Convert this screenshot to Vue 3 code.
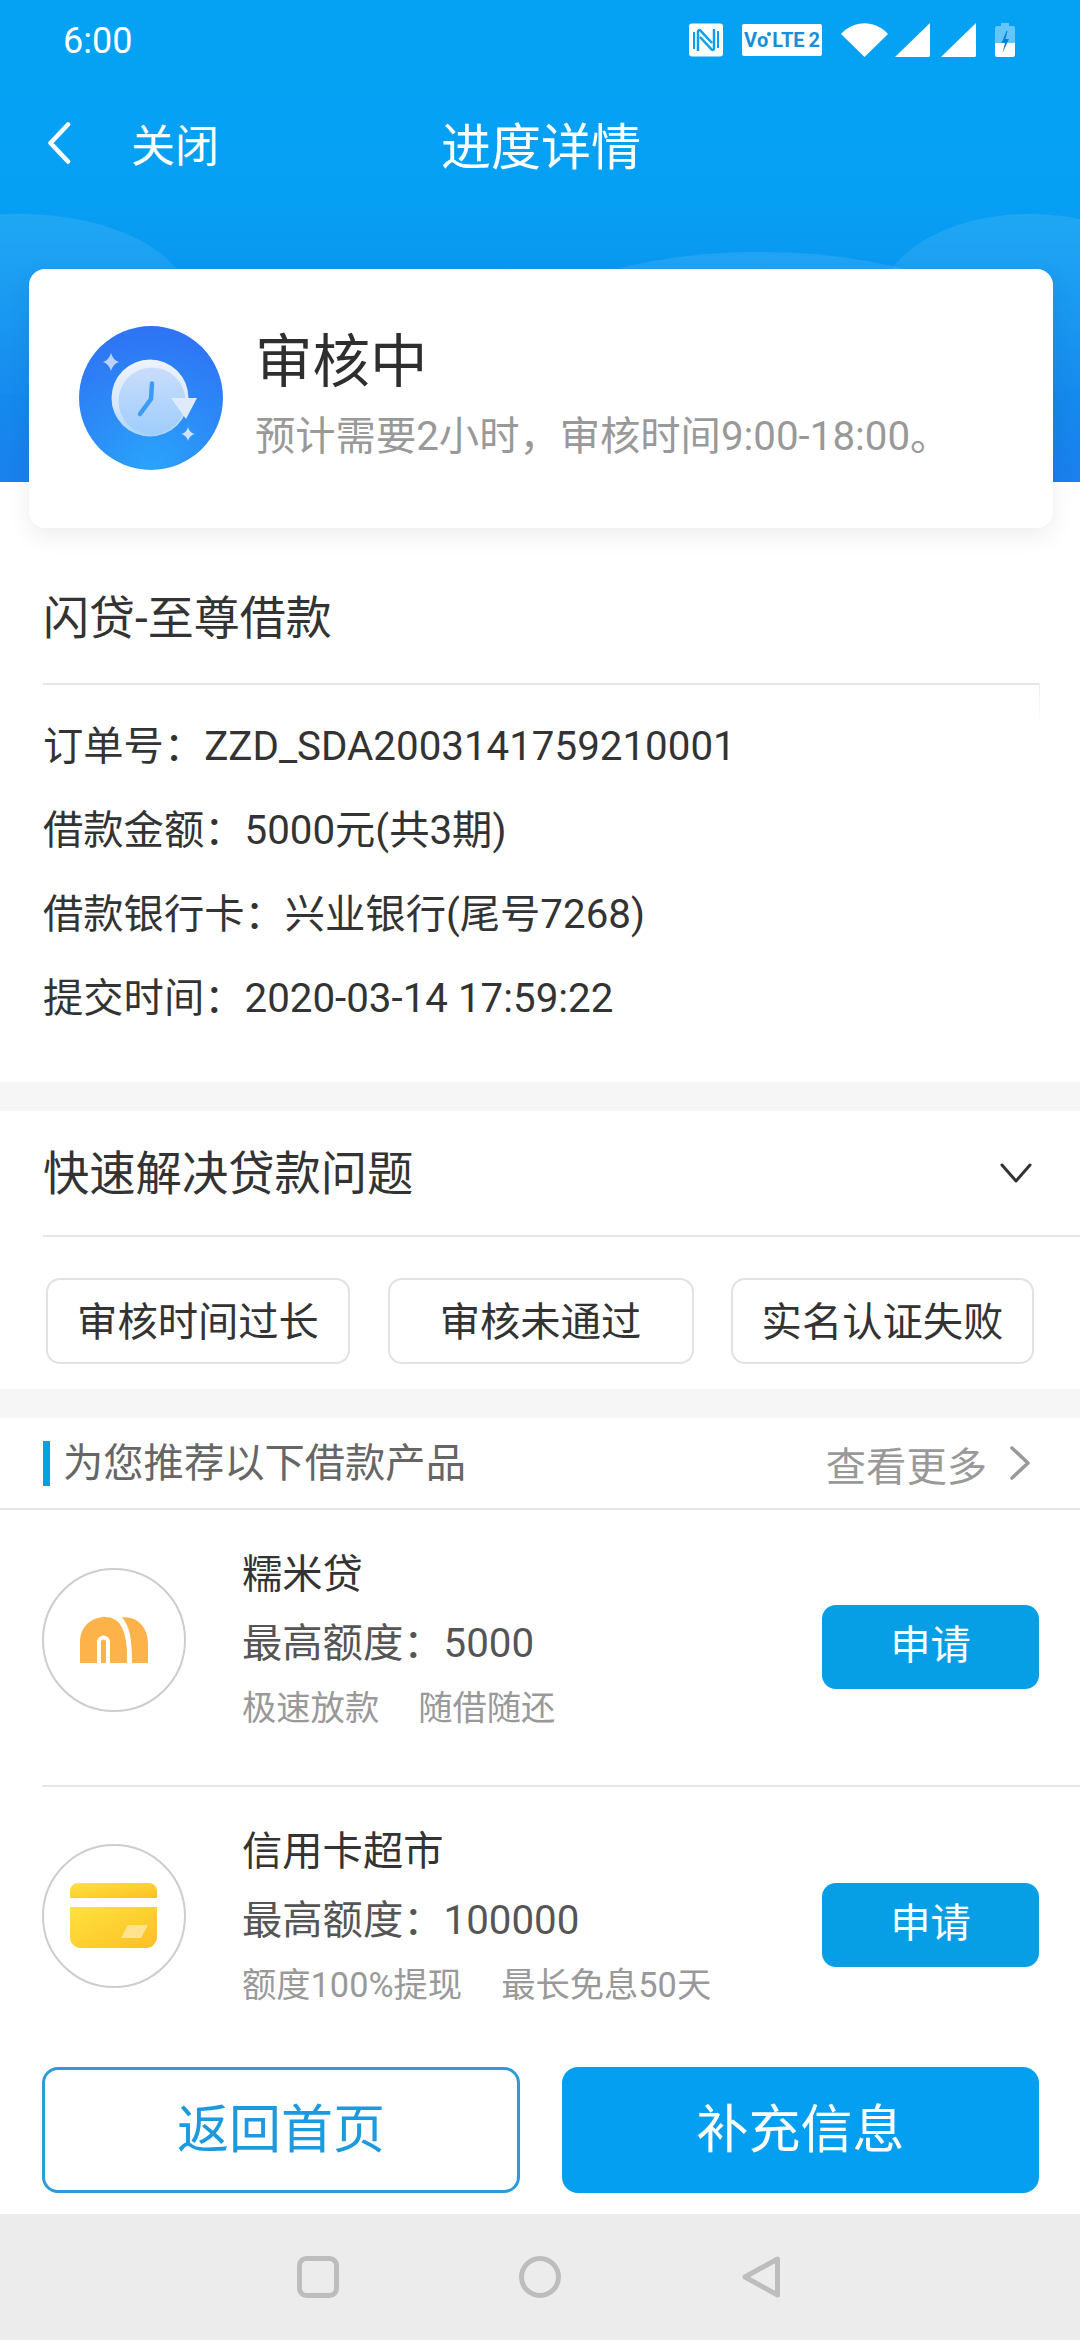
<script setup>
const infoRows = [
  '订单号：ZZD_SDA2003141759210001',
  '借款金额：5000元(共3期)',
  '借款银行卡：兴业银行(尾号7268)',
  '提交时间：2020-03-14 17:59:22'
]
const chips = ['审核时间过长', '审核未通过', '实名认证失败']
const products = [
  { name: '糯米贷', limit: '最高额度：5000', tags: ['极速放款', '随借随还'], kind: 'm' },
  { name: '信用卡超市', limit: '最高额度：100000', tags: ['额度100%提现', '最长免息50天'], kind: 'card' }
]
</script>

<template>
  <div class="page">
    <header class="hero">
      <svg class="clouds" viewBox="0 0 1080 268" aria-hidden="true">
        <defs>
          <linearGradient id="cloud" x1="0" y1="0" x2="0" y2="1">
            <stop offset="0" stop-color="#fff" stop-opacity=".1" />
            <stop offset="1" stop-color="#fff" stop-opacity=".01" />
          </linearGradient>
        </defs>
        <ellipse cx="20" cy="90" rx="170" ry="90" fill="url(#cloud)" />
        <ellipse cx="1030" cy="90" rx="150" ry="90" fill="url(#cloud)" />
        <ellipse cx="760" cy="116" rx="230" ry="78" fill="url(#cloud)" />
      </svg>

      <div class="status">
        <span class="time">6:00</span>
        <div class="status-icons">
          <svg width="34" height="34" viewBox="0 0 34 34">
            <rect x="0" y="0.5" width="34" height="33" rx="3" fill="#fff" />
            <path d="M9 28V8.500c0-1.500 1.500-1.800 2.500-.8L23 20M25 6v19.500c0 1.500-1.500 1.800-2.500.8L11 14" fill="none" stroke="#0aa0f2" stroke-width="2.500" />
            <path d="M5 9v17M29 8v17" fill="none" stroke="#0aa0f2" stroke-width="2" />
          </svg>
          <div class="volte"><span>V</span><span>o</span><span class="volte-wave"></span><span>LTE</span><span class="volte-2">2</span></div>
          <svg class="wifi" width="47" height="34" viewBox="0 0 47 34">
            <path d="M0 11C13-3.500 34-3.500 47 11L23.500 34Z" fill="#fff" />
            <path d="M5 26l4-5 4 5zM5 28h8l-4 5z" fill="#0aa0f2" />
          </svg>
          <svg class="sig" width="35" height="34" viewBox="0 0 35 34">
            <path d="M35 0V32.500a1.500 1.500 0 0 1-1.500 1.500H0Z" fill="#fff" />
          </svg>
          <svg class="sig2" width="35" height="34" viewBox="0 0 35 34">
            <path d="M35 0V32.500a1.500 1.500 0 0 1-1.500 1.500H0Z" fill="#fff" />
          </svg>
          <svg class="bat" width="20" height="34" viewBox="0 0 20 34">
            <path d="M6 0h8v3h4a2 2 0 0 1 2 2v15H0V5a2 2 0 0 1 2-2h4z" fill="#fff" fill-opacity=".38" />
            <path d="M0 20h20v12a2 2 0 0 1-2 2H2a2 2 0 0 1-2-2z" fill="#fff" />
            <path d="M11.500 8L6.500 20h3.500L7.500 30 14 16h-3.500L12.500 8z" fill="#0a7ed0" />
          </svg>
        </div>
      </div>

      <nav class="topnav">
        <svg class="back" width="24" height="42" viewBox="0 0 24 42">
          <path d="M21 2.500L3.500 21 21 39.500" fill="none" stroke="#fff" stroke-width="4.500" stroke-linecap="round" stroke-linejoin="round" />
        </svg>
        <span class="close">关闭</span>
        <span class="title">进度详情</span>
      </nav>
    </header>

    <section class="state-card">
      <svg class="state-icon" width="144" height="144" viewBox="0 0 144 144">
        <defs>
          <radialGradient id="disc" cx="0.5" cy="1" r="1.05">
            <stop offset="0" stop-color="#2aa4fb" />
            <stop offset="0.5" stop-color="#2c8af7" />
            <stop offset="1" stop-color="#2f70f4" />
          </radialGradient>
          <linearGradient id="ring" x1="0" y1="0" x2="0" y2="1">
            <stop offset="0" stop-color="#eef3fc" />
            <stop offset="0.6" stop-color="#d8e7fb" />
            <stop offset="1" stop-color="#a8d2fc" />
          </linearGradient>
          <linearGradient id="dial" x1="0" y1="0" x2="0" y2="1">
            <stop offset="0" stop-color="#c9ddfb" />
            <stop offset="1" stop-color="#9fcdfc" />
          </linearGradient>
        </defs>
        <circle cx="72" cy="72" r="72" fill="url(#disc)" />
        <circle cx="71" cy="72" r="38.500" fill="url(#ring)" />
        <circle cx="73" cy="75" r="33.500" fill="url(#dial)" />
        <path d="M92 72H118L107 93Z" fill="#dfeafa" />
        <path d="M73 57.500L72 73 61 88" fill="none" stroke="#3d9bf5" stroke-width="4.500" stroke-linecap="round" stroke-linejoin="round" />
        <path d="M32 27q2 7 8 9q-6 2-8 9q-2-7-8-9q6-2 8-9Z" fill="#bcd2fa" />
        <path d="M109 101q1.500 5.500 6.500 7q-5 1.500-6.500 7q-1.500-5.500-6.500-7q5-1.500 6.500-7Z" fill="#cfe2fb" />
      </svg>
      <div class="state-text">
        <div class="state-title">审核中</div>
        <div class="state-sub">预计需要2小时，审核时间9:00-18:00。</div>
      </div>
    </section>

    <section class="order">
      <h2 class="order-title">闪贷-至尊借款</h2>
      <p v-for="row in infoRows" :key="row" class="order-row">{{ row }}</p>
    </section>

    <section class="quick">
      <div class="quick-head">
        <span class="quick-title">快速解决贷款问题</span>
        <svg width="32" height="20" viewBox="0 0 32 20">
          <path d="M2 2L16 18 30 2" fill="none" stroke="#333" stroke-width="3" stroke-linecap="round" stroke-linejoin="round" />
        </svg>
      </div>
      <div class="chips">
        <div v-for="chip in chips" :key="chip" class="chip">{{ chip }}</div>
      </div>
    </section>

    <section class="recommend">
      <div class="rec-head">
        <span class="rec-title">为您推荐以下借款产品</span>
        <span class="rec-more">查看更多</span>
        <svg width="22" height="34" viewBox="0 0 22 34">
          <path d="M3 2L19 17 3 32" fill="none" stroke="#999" stroke-width="3.500" stroke-linecap="round" stroke-linejoin="round" />
        </svg>
      </div>

      <div v-for="p in products" :key="p.name" class="product">
        <svg class="logo" width="144" height="144" viewBox="0 0 144 144">
          <defs>
            <linearGradient id="gold" x1="0" y1="0" x2="1" y2="1">
              <stop offset="0" stop-color="#ffe23e" />
              <stop offset="1" stop-color="#fcbf25" />
            </linearGradient>
          </defs>
          <circle cx="72" cy="72" r="71" fill="#fff" stroke="#cdcdcd" stroke-width="2" />
          <template v-if="p.kind === 'm'">
            <path d="M38 95V74C38 58 50 49 63 49C78 49 86 62 85 95Z" fill="#fdb34a" />
            <path d="M80 49.500C96 48 106 60 106 76V95H90C90 72 88 58 80 49.500Z" fill="#fdb34a" />
            <path d="M55 95V74A6.500 6.500 0 0 1 68 74V95Z" fill="#fff" />
            <path d="M59 95V74A2.500 2.500 0 0 1 64 74V95Z" fill="#fdb34a" />
          </template>
          <template v-else>
            <path d="M28 54V47a8 8 0 0 1 8-8H107a8 8 0 0 1 8 8v7Z" fill="url(#gold)" />
            <path d="M28 63H115V93a11 11 0 0 1-11 11H39a11 11 0 0 1-11-11Z" fill="url(#gold)" />
            <path d="M86 81H106L99 94H79Z" fill="#ffe38f" />
          </template>
        </svg>
        <div class="prod-text">
          <div class="prod-name">{{ p.name }}</div>
          <div class="prod-limit">{{ p.limit }}</div>
          <div class="prod-tags"><span v-for="t in p.tags" :key="t">{{ t }}</span></div>
        </div>
        <button class="apply">申请</button>
      </div>
    </section>

    <footer class="actions">
      <button class="act ghost">返回首页</button>
      <button class="act solid">补充信息</button>
    </footer>

    <div class="sysnav">
      <svg width="42" height="42" viewBox="0 0 42 42">
        <rect x="2.500" y="2.500" width="37" height="37" rx="7" fill="none" stroke="#bdbdbd" stroke-width="5" />
      </svg>
      <svg width="42" height="42" viewBox="0 0 42 42">
        <circle cx="21" cy="21" r="18.500" fill="none" stroke="#bdbdbd" stroke-width="5" />
      </svg>
      <svg width="42" height="42" viewBox="0 0 42 42">
        <path d="M37.500 3V39L5 21Z" fill="none" stroke="#bdbdbd" stroke-width="5" stroke-linejoin="round" />
      </svg>
    </div>
  </div>
</template>

<style>
html, body { margin: 0; background: #fff; }
</style>

<style scoped>
.page {
  width: 1080px;
  height: 2340px;
  overflow: hidden;
  display: flex;
  flex-direction: column;
  background: #fff;
  color: #333;
  font-family: Roboto, "Noto Sans CJK SC", sans-serif;
}
.hero {
  position: relative;
  flex: none;
  height: 482px;
  background: linear-gradient(180deg, #05a2f4 0%, #05a0f3 40%, #1a80ec 100%);
  color: #fff;
}
.clouds {
  position: absolute;
  left: 0;
  top: 214px;
  width: 1080px;
  height: 268px;
}
.status {
  position: relative;
  height: 80px;
  padding: 0 65px 0 63px;
  display: flex;
  align-items: center;
  justify-content: space-between;
}
.time { font-size: 36px; margin-top: 2px; }
.status-icons { display: flex; align-items: center; gap: 19px; }
.sig { margin-left: -12px; }
.sig2 { margin-left: -8px; }
.volte {
  width: 80px;
  height: 32px;
  background: #fff;
  border-radius: 2px;
  color: #1590d6;
  font-size: 20px;
  font-weight: 700;
  display: flex;
  align-items: center;
  justify-content: center;
}
.volte-wave {
  width: 4px;
  height: 4px;
  margin: -12px 1px 0 -1px;
  border-radius: 50%;
  background: #1590d6;
}
.volte-2 { margin-left: 4px; }
.topnav {
  position: relative;
  height: 132px;
  box-sizing: border-box;
  padding: 0 0 6px 47px;
  display: flex;
  align-items: center;
}
.back { flex: none; }
.close { font-size: 44px; margin-left: 60px; width: 88px; white-space: nowrap; }
.title { font-size: 50px; margin-left: 222px; white-space: nowrap; }

.state-card {
  position: relative;
  flex: none;
  width: 1024px;
  height: 259px;
  margin: -213px 0 0 29px;
  box-sizing: border-box;
  padding: 0 0 0 50px;
  background: #fff;
  border-radius: 16px;
  box-shadow: 0 8px 24px rgba(0, 0, 0, .07);
  display: flex;
  align-items: center;
  gap: 32px;
}
.state-icon { flex: none; margin-top: -1px; }
.state-text { align-self: flex-start; padding-top: 54px; }
.state-title { font-size: 57.500px; line-height: 80px; color: #2e2e2e; }
.state-sub { font-size: 40.300px; line-height: 56px; color: #999; white-space: nowrap; margin-top: 6px; }

.order {
  flex: none;
  height: 554px;
  box-sizing: border-box;
  padding: 60px 40px 0 43px;
}
.order-title {
  position: relative;
  margin: 0 0 20px;
  padding-bottom: 35px;
  font-size: 46px;
  font-weight: 400;
  line-height: 60px;
  color: #333;
  border-bottom: 2px solid #e6e6e6;
}
.order-title::after {
  content: "";
  position: absolute;
  right: 0;
  top: 100%;
  width: 1px;
  height: 42px;
  background: linear-gradient(180deg, #ececec, rgba(236, 236, 236, 0));
}
.order-row {
  margin: 0;
  font-size: 40.300px;
  line-height: 84px;
  color: #333;
  white-space: nowrap;
}

.quick {
  flex: none;
  height: 278px;
  border-top: 29px solid #f6f6f6;
  border-bottom: 29px solid #f6f6f6;
  background: #fff;
}
.quick-head {
  margin-left: 43px;
  height: 124px;
  padding-right: 48px;
  border-bottom: 2px solid #e6e6e6;
  display: flex;
  align-items: center;
  justify-content: space-between;
}
.quick-title { font-size: 46.300px; color: #333; margin-bottom: 8px; }
.chips {
  padding: 41px 0 0 46px;
  display: grid;
  grid-template-columns: 304px 306px 303px;
  column-gap: 37.500px;
}
.chip {
  height: 86px;
  box-sizing: border-box;
  padding-bottom: 6px;
  border: 2px solid #e2e2e2;
  border-radius: 14px;
  display: flex;
  align-items: center;
  justify-content: center;
  font-size: 40.300px;
  color: #333;
}

.recommend { flex: 1; min-height: 0; }
.rec-head {
  height: 92px;
  box-sizing: border-box;
  border-bottom: 2px solid #e6e6e6;
  padding: 0 49px 0 63px;
  display: flex;
  align-items: center;
  position: relative;
}
.rec-head::before {
  content: "";
  position: absolute;
  left: 43px;
  top: 23px;
  width: 7px;
  height: 45px;
  background: #0a9fe0;
}
.rec-title { font-size: 40.300px; color: #666; margin-top: -8px; }
.rec-more { font-size: 40.300px; color: #999; margin-left: auto; margin-right: 22px; }
.product {
  height: 275px;
  box-sizing: border-box;
  margin-left: 42px;
  padding-right: 41px;
  display: flex;
  align-items: flex-start;
  position: relative;
}
.product + .product { border-top: 2px solid #e6e6e6; height: 280px; }
.logo { flex: none; margin-top: 58px; }
.product + .product .logo { margin-top: 57px; }
.prod-text { margin: 35px 0 0 56px; flex: 1; min-width: 0; }
.prod-name { font-size: 40.300px; line-height: 60px; color: #333; white-space: nowrap; }
.prod-limit { font-size: 40.300px; line-height: 78px; color: #555; white-space: nowrap; }
.prod-tags {
  font-size: 34.300px;
  line-height: 50px;
  color: #999;
  white-space: nowrap;
  display: flex;
  gap: 39px;
}
.apply {
  flex: none;
  width: 217px;
  height: 84px;
  margin-top: 95px;
  padding: 0 0 12px;
  border: 0;
  border-radius: 14px;
  background: #069fe6;
  color: #fff;
  font: inherit;
  font-size: 40.300px;
}
.product + .product .apply { margin-top: 96px; }

.actions {
  flex: none;
  height: 147px;
  box-sizing: border-box;
  padding: 0 41px 21px 42px;
  display: flex;
  gap: 42px;
}
.act {
  flex: none;
  padding: 0 0 10px;
  border-radius: 16px;
  font: inherit;
  font-size: 52px;
}
.ghost { width: 478px; background: #fff; border: 3px solid #2a9bdb; color: #1c9ae0; }
.solid { width: 477px; background: #049ff1; border: 0; color: #fff; }

.sysnav {
  flex: none;
  height: 126px;
  box-sizing: border-box;
  padding: 0 298px 0 297px;
  background: #ececec;
  display: flex;
  align-items: center;
  justify-content: space-between;
}
</style>
